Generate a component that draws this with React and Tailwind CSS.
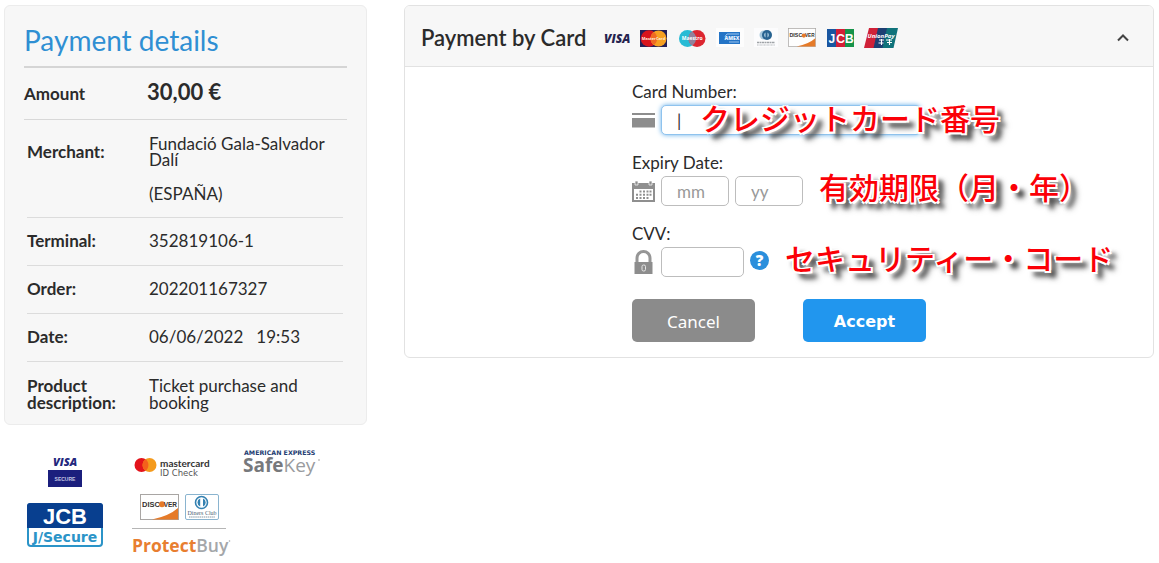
import React from "react";

const details = [
  { label: "Terminal:", value: "352819106-1" },
  { label: "Order:", value: "202201167327" },
  { label: "Date:", value: "06/06/2022\u00a0\u00a0 19:53" },
];

function Note({ children, className = "" }) {
  return (
    <span
      lang="ja"
      className={`whitespace-nowrap font-['Noto_Sans_CJK_JP',sans-serif] text-[30px] font-medium text-[#fb0007] [text-shadow:1px_0_0_#fff,-1px_0_0_#fff,0_1px_0_#fff,0_-1px_0_#fff,2px_2px_0_#fff,-2px_-1px_0_#fff,2px_-1px_0_#fff,-1px_2px_0_#fff,6px_6px_4px_#444,7px_7px_6px_#666] ${className}`}
    >
      {children}
    </span>
  );
}

function VisaIcon() {
  return (
    <svg viewBox="0 0 28 20" className="h-5 w-7" role="img" aria-label="Visa">
      <text x="2" y="15" fontFamily="Open Sans, sans-serif" fontSize="12" fontWeight="800" fontStyle="italic" fill="#25234f">VISA</text>
    </svg>
  );
}

function MastercardIcon() {
  return (
    <svg viewBox="0 0 28 20" className="h-5 w-7" role="img" aria-label="Mastercard">
      <rect y="2" width="27" height="17" fill="#252057" />
      <circle cx="9" cy="10.5" r="8.3" fill="#d8141c" />
      <circle cx="18.500" cy="10.5" r="8" fill="#f6a021" />
      <path d="M13.800 4a8 8 0 0 1 0 13a8 8 0 0 1 0-13" fill="#ef6a22" />
      <text x="13.500" y="12" textAnchor="middle" fontFamily="Open Sans, sans-serif" fontSize="4" fontWeight="700" fill="#ffe9df">MasterCard</text>
    </svg>
  );
}

function MaestroIcon() {
  return (
    <svg viewBox="0 0 28 20" className="h-5 w-7" role="img" aria-label="Maestro">
      <circle cx="9.5" cy="10.5" r="8.5" fill="#28bbd5" />
      <circle cx="19" cy="10.5" r="8.5" fill="#dc2630" />
      <path d="M14.2 3.4a8.5 8.5 0 0 1 0 14.2a8.5 8.5 0 0 1 0-14.2" fill="#93819a" />
      <text x="14.200" y="12.300" textAnchor="middle" fontFamily="Open Sans, sans-serif" fontSize="5" fontWeight="700" fill="#fff">Maestro</text>
    </svg>
  );
}

function AmexIcon() {
  return (
    <svg viewBox="0 0 28 20" className="h-5 w-7" role="img" aria-label="American Express">
      <rect width="28" height="19" fill="#fdfdfd" />
      <path d="M3 4h21v12H3z" fill="#2474c6" />
      <path d="M9 8.500 11 6h12M13 14h10" stroke="#9cc4ee" strokeWidth="1" fill="none" />
      <text x="8.500" y="12" fontFamily="Open Sans, sans-serif" fontSize="5" fontWeight="800" fill="#e6f2ff">AMEX</text>
    </svg>
  );
}

function DinersIcon() {
  return (
    <svg viewBox="0 0 24 20" className="h-5 w-6" role="img" aria-label="Diners Club">
      <rect width="24" height="19" fill="#fcfcfd" />
      <circle cx="10" cy="7" r="4.5" fill="#a6c8dd" />
      <circle cx="13" cy="7" r="5" fill="#276391" />
      <path d="M11.5 4.5a3 3 0 0 0 0 5zM13.5 4.5a3 3 0 0 1 0 5z" fill="#b5d5e8" />
      <path d="M3 14.5h18" stroke="#9fa3a7" strokeWidth="1.500" strokeDasharray="2 .5" />
      <path d="M3 17h18" stroke="#b9bdc1" strokeWidth="1" strokeDasharray="1 .4" />
    </svg>
  );
}

function DiscoverIcon({ className }) {
  return (
    <svg viewBox="0 0 39 26" className={className} role="img" aria-label="Discover">
      <rect x=".5" y=".5" width="38" height="25" fill="#fefefe" stroke="#a8a5a3" />
      <path d="M38 14v11.500H12Q29 22 38 14" fill="#e57a28" />
      <text x="2" y="13" fontFamily="Liberation Sans, sans-serif" fontSize="7.500" fontWeight="700" fill="#35312f">DISC</text>
      <circle cx="22" cy="10.300" r="3" fill="#e57a28" />
      <text x="37" y="13" textAnchor="end" fontFamily="Liberation Sans, sans-serif" fontSize="6.500" fontWeight="700" fill="#35312f">VER</text>
    </svg>
  );
}

function JcbIcon() {
  return (
    <svg viewBox="0 0 28 20" className="h-5 w-7" role="img" aria-label="JCB">
      <rect x="1" y="1" width="9" height="18" fill="#1956a0" />
      <rect x="10" y="1" width="9" height="18" fill="#d31f36" />
      <rect x="19" y="1" width="9" height="18" fill="#16934a" />
      <g fontFamily="Liberation Sans, sans-serif" fontSize="12" fontWeight="700" fill="#fff">
        <text x="2.500" y="14.5">J</text>
        <text x="10.2" y="14.5">C</text>
        <text x="19" y="14.5">B</text>
      </g>
    </svg>
  );
}

function UnionPayIcon() {
  return (
    <svg viewBox="0 0 34 22" className="h-[22px] w-[34px]" role="img" aria-label="UnionPay">
      <path d="M5 1h11l-4.500 20H0z" fill="#cf2138" />
      <path d="M14 1h11l-4.500 20H9.500z" fill="#1d3f73" />
      <path d="M23 1h11l-4.500 20H18.500z" fill="#10737b" />
      <text x="17" y="11" textAnchor="middle" fontFamily="Open Sans, sans-serif" fontSize="6" fontWeight="700" fontStyle="italic" fill="#fff">UnionPay</text>
      <path d="M15 13h5M17.500 12v6M14.500 16h5M22 13h6M23 15.500h5M25.500 12v6" stroke="#fff" strokeWidth="1.100" fill="none" />
    </svg>
  );
}

function CardIcon() {
  return (
    <svg viewBox="0 0 23 16" className="h-4 w-[23px]" aria-hidden="true">
      <path d="M0 1h23v2H0zM0 6h23v9.500H0z" fill="#8d8d8d" />
    </svg>
  );
}

function CalendarIcon() {
  return (
    <svg viewBox="0 0 23 21" className="h-[21px] w-[23px]" aria-hidden="true">
      <path d="M0 2h23v19H0z" fill="#8f8f8f" />
      <path d="M2 8h19v11H2z" fill="#fff" />
      <path d="M3 0h3v4H3zM17 0h3v4h-3z" fill="#8f8f8f" stroke="#fff" strokeWidth=".7" />
      <path d="M7.500 9.500h2v2h-2zm3.500 0h2v2h-2zm3.500 0h2v2h-2zm3 0h2v2h-2zM4 12.700h2v2H4zm3.500 0h2v2h-2zm3.500 0h2v2h-2zm3.500 0h2v2h-2zm3 0h2v2h-2zM4 16h2v2H4zm3.500 0h2v2h-2zm3.500 0h2v2h-2zm3.500 0h2v2h-2z" fill="#8f8f8f" />
    </svg>
  );
}

function LockIcon() {
  return (
    <svg viewBox="0 0 23 24" className="h-6 w-[23px]" aria-hidden="true">
      <path d="M5 13V8a6.500 6.500 0 0 1 13 0v5" fill="none" stroke="#969696" strokeWidth="3" />
      <path d="M2.500 12h18v12h-18z" fill="#8d8d8d" />
      <rect x="10" y="15" width="3.500" height="6" rx="1.500" fill="#8d8d8d" stroke="#e6e6e6" strokeWidth="1" />
    </svg>
  );
}

function VisaSecure() {
  return (
    <svg viewBox="0 0 34 32" className="h-8 w-[34px]" role="img" aria-label="Visa Secure">
      <text x="5" y="10.500" fontFamily="Open Sans, sans-serif" fontSize="11" fontWeight="800" fontStyle="italic" fill="#22277d">VISA</text>
      <rect y="15" width="34" height="17" fill="#1b1f7d" />
      <text x="17" y="25.500" textAnchor="middle" fontFamily="Liberation Sans, sans-serif" fontSize="5" fontWeight="700" fill="#c3c4e2">SECURE</text>
    </svg>
  );
}

function JcbSecure() {
  return (
    <svg viewBox="0 0 76 44" className="h-11 w-[76px]" role="img" aria-label="JCB J/Secure">
      <rect x="1" y="1" width="74" height="42" rx="3" fill="#fff" stroke="#2b94c8" strokeWidth="2" />
      <path d="M3 0h70a3 3 0 0 1 3 3v22H0V3a3 3 0 0 1 3-3" fill="#083f8f" />
      <text x="38" y="20.500" textAnchor="middle" fontFamily="Liberation Sans, sans-serif" fontSize="22" fontWeight="700" fill="#fff">JCB</text>
      <text x="38" y="38.500" textAnchor="middle" fontFamily="DejaVu Sans, sans-serif" fontSize="14" fontWeight="700" fill="#2b94c8">J/Secure</text>
    </svg>
  );
}

function MastercardCheck() {
  return (
    <svg viewBox="0 0 80 22" className="h-[22px] w-20" role="img" aria-label="Mastercard ID Check">
      <circle cx="7.500" cy="8" r="7" fill="#e3131b" />
      <circle cx="15.500" cy="8" r="7" fill="#f49a1c" />
      <path d="M11.500 2.300a7 7 0 0 1 0 11.400a7 7 0 0 1 0-11.400" fill="#f4601c" />
      <text x="26" y="10" fontFamily="Lato, sans-serif" fontSize="10" fontWeight="700" fill="#333">mastercard</text>
      <text x="26" y="19" fontFamily="DejaVu Sans, sans-serif" fontSize="8.500" fill="#555">ID Check</text>
    </svg>
  );
}

function SafeKey() {
  return (
    <svg viewBox="0 0 80 30" className="h-[30px] w-20" role="img" aria-label="American Express SafeKey">
      <text x="1" y="5.500" fontFamily="DejaVu Sans, sans-serif" fontSize="6.300" fontWeight="700" fill="#1d3c72">AMERICAN EXPRESS</text>
      <text x="0" y="22.500" fontFamily="Open Sans, sans-serif" fontSize="19" fontWeight="700" fill="#77797c">Safe<tspan fontWeight="400" fill="#999b9e">Key</tspan></text>
      <circle cx="76" cy="11" r=".8" fill="#999" />
    </svg>
  );
}

function DinersBadge() {
  return (
    <svg viewBox="0 0 34 26" className="h-[26px] w-[34px]" role="img" aria-label="Diners Club International">
      <rect x=".5" y=".5" width="33" height="25" rx="1.500" fill="#fff" stroke="#8ab4cf" />
      <circle cx="16.500" cy="8.500" r="6" fill="#fff" stroke="#3481b1" strokeWidth="1.600" />
      <path d="M15.200 4.500a4.300 4.300 0 0 0 0 8zM18 4.500a4.300 4.300 0 0 1 0 8z" fill="#3481b1" />
      <text x="17" y="20.500" textAnchor="middle" fontFamily="Liberation Serif, serif" fontSize="6" fill="#4d6476">Diners Club</text>
      <path d="M4 23h26" stroke="#8799a6" strokeWidth="1" strokeDasharray="1.500 .6" />
    </svg>
  );
}

function ProtectBuy() {
  return (
    <svg viewBox="0 0 99 24" className="h-6 w-[99px]" role="img" aria-label="ProtectBuy">
      <text x="0" y="18" fontFamily="Open Sans, sans-serif" fontSize="17.500" fontWeight="700" fill="#e87e30">Protect<tspan fontWeight="600" fill="#a4a7aa">Buy</tspan></text>
      <circle cx="97.500" cy="7" r=".8" fill="#a4a7aa" />
    </svg>
  );
}

const inputClass =
  "h-[30px] rounded-[5px] border bg-white px-[15px] text-[17px] text-[#333] placeholder:text-[#999] outline-none";

function Divider({ children }) {
  return <tr className="border-b border-[#dcdcdc]">{children}</tr>;
}

export default function App() {
  return (
    <div className="flex min-h-screen items-start gap-[37px] bg-white pt-[5px] pr-[5px] pl-1 font-['Lato',sans-serif] text-[17px] text-[#2b2b2b] [font-variant-ligatures:none]">
      <aside className="w-[363px] shrink-0">
        <section className="rounded-[6px] border border-[#ececec] bg-[#f7f7f7] px-[19px] pb-[13px]">
          <h1 className="border-b-2 border-[#d5d5d5] pt-4 pb-2 text-[28px] leading-9 text-[#2f8fd3]">Payment details</h1>
          <div className="flex h-[52px] items-center border-b border-[#d8d8d8] pb-1">
            <span className="w-[123px] pt-1 font-bold">Amount</span>
            <strong className="text-[22px] font-bold">30,00 €</strong>
          </div>
          <div className="pr-1 pl-[3px]">
            <table className="w-full border-collapse text-left leading-4">
              <tbody>
                <tr>
                  <th scope="row" className="w-[122px] pt-4 align-middle font-bold">Merchant:</th>
                  <td className="pt-4 pr-4">Fundació Gala-Salvador Dalí</td>
                </tr>
                <Divider>
                  <td />
                  <td className="pt-[18px] pb-[15px]">(ESPAÑA)</td>
                </Divider>
                {details.map((d) => (
                  <Divider key={d.label}>
                    <th scope="row" className="pt-[15px] pb-4 font-bold">{d.label}</th>
                    <td className="pt-[15px] pb-4">{d.value}</td>
                  </Divider>
                ))}
                <tr>
                  <th scope="row" className="pt-[15px] leading-[17px] font-bold">Product description:</th>
                  <td className="pt-[15px] pr-8 leading-[17px]">Ticket purchase and booking</td>
                </tr>
              </tbody>
            </table>
          </div>
        </section>
        <div className="flex items-start pt-6">
          <div className="flex w-[122px] flex-col items-center gap-4 pt-[6px]">
            <VisaSecure />
            <JcbSecure />
          </div>
          <div className="flex w-[117px] flex-col items-start pt-2 pl-[6px]">
            <div className="pl-[2px]"><MastercardCheck /></div>
            <div className="flex gap-[6px] pt-[15px] pl-2">
              <DiscoverIcon className="h-[26px] w-[39px]" />
              <DinersBadge />
            </div>
            <hr className="mt-[8px] mb-[5px] w-[94px] border-[#b5b5b5]" />
            <ProtectBuy />
          </div>
          <SafeKey />
        </div>
      </aside>

      <main className="min-w-0 flex-1 rounded-[6px] border border-[#e2e2e2] bg-white">
        <header className="flex h-[61px] items-center rounded-t-[5px] border-b border-[#e2e2e2] bg-[#f7f7f7] px-4 pt-[3px]">
          <h2 className="w-[181px] text-[22px] leading-7 font-semibold">Payment by Card</h2>
          <div className="flex items-center gap-[10px]">
            <VisaIcon />
            <MastercardIcon />
            <MaestroIcon />
            <AmexIcon />
            <DinersIcon />
            <DiscoverIcon className="h-[19px] w-7" />
            <JcbIcon />
            <UnionPayIcon />
          </div>
          <button type="button" aria-label="Collapse" className="ml-auto flex size-7 items-center justify-center">
            <svg viewBox="0 0 12 8" className="h-2 w-3" aria-hidden="true">
              <path d="M1 6.500 6 1.500l5 5" fill="none" stroke="#444" strokeWidth="2" />
            </svg>
          </button>
        </header>

        <form className="flex flex-col gap-[18px] pt-[15px] pb-[15px] pl-[227px]">
          <div>
            <label htmlFor="card" className="block leading-5">Card Number:</label>
            <div className="relative mt-[3px] flex items-center gap-[6px]">
              <CardIcon />
              <input id="card" defaultValue="|" className={`${inputClass} w-[260px] border-[#8fc3ee] shadow-[0_0_5px_#66afe9]`} />
              <Note className="pointer-events-none absolute top-0 left-[68px] leading-6">クレジットカード番号</Note>
            </div>
          </div>
          <div>
            <label htmlFor="month" className="block leading-5">Expiry Date:</label>
            <div className="mt-[3px] flex items-center gap-[6px]">
              <CalendarIcon />
              <input id="month" placeholder="mm" className={`${inputClass} w-[68px] border-[#bdbdbd]`} />
              <input aria-label="Expiry year" placeholder="yy" className={`${inputClass} w-[68px] border-[#bdbdbd]`} />
              <Note className="self-start pl-[10px] leading-5">有効期限（月・年）</Note>
            </div>
          </div>
          <div>
            <label htmlFor="cvv" className="block leading-5">CVV:</label>
            <div className="mt-[3px] flex items-center gap-[6px]">
              <LockIcon />
              <input id="cvv" className={`${inputClass} w-[83px] border-[#bdbdbd]`} />
              <button type="button" aria-label="What is the CVV?" className="mb-1 size-[19px] rounded-full bg-[#2b8fdc] font-['Open_Sans',sans-serif] text-[15px] leading-[19px] font-extrabold text-white">?</button>
              <Note className="self-start pl-[10px] leading-5">セキュリティー・コード</Note>
            </div>
          </div>
          <div className="flex gap-12 pt-1">
            <button type="button" className="h-[43px] w-[123px] rounded-[5px] bg-[#8b8b8b] pt-[2px] font-['Noto_Sans',sans-serif] text-[17px] text-white">Cancel</button>
            <button type="submit" className="h-[43px] w-[123px] rounded-[5px] bg-[#2196ee] pt-[2px] font-['DejaVu_Sans',sans-serif] text-base font-bold text-white">Accept</button>
          </div>
        </form>
      </main>
    </div>
  );
}
